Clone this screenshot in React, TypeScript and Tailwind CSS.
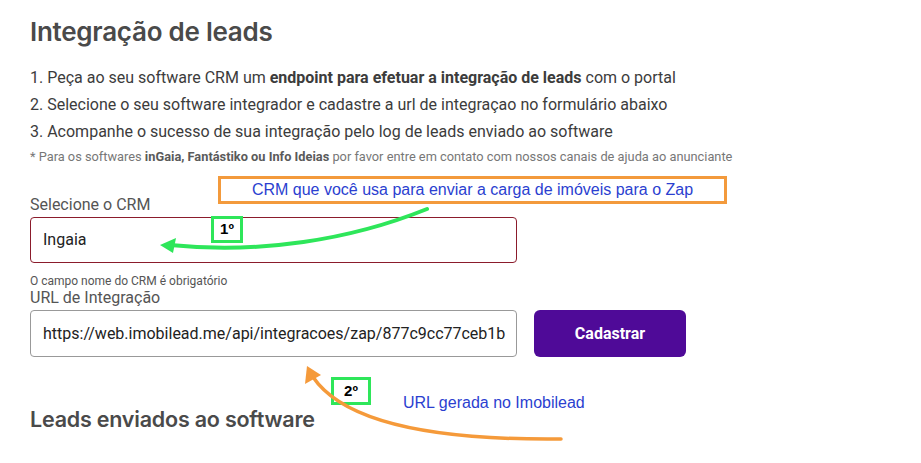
import React from 'react';

const roboto = "font-['Roboto','Liberation_Sans',sans-serif]";
const heading = "font-['Inter','Lato',sans-serif]";
const arial = "font-['Liberation_Sans','Arial',sans-serif]";

function Annotations() {
  return (
    <div className="pointer-events-none absolute inset-0">
      <div className={`absolute left-[218px] top-[176px] flex h-[28px] w-[509px] items-center justify-center border-[3px] border-[#f39a3c] bg-white text-[16px] text-[#2b3fd0] ${arial}`}>
        CRM que você usa para enviar a carga de imóveis para o Zap
      </div>
      <div className={`absolute left-[211px] top-[216px] flex h-[27px] w-[32px] items-center justify-center border-[3px] border-[#2ee65a] bg-white text-[15px] font-bold text-black ${arial}`}>
        1º
      </div>
      <div className={`absolute left-[331px] top-[377px] flex h-[28px] w-[40px] items-center justify-center border-[3px] border-[#2ee65a] bg-white text-[15px] font-bold text-black ${arial}`}>
        2º
      </div>
      <div className={`absolute left-[403px] top-[393px] text-[16px] leading-[20px] text-[#2b3fd0] ${arial}`}>
        URL gerada no Imobilead
      </div>
      <svg className="absolute inset-0" width="921" height="463" viewBox="0 0 921 463">
        <path d="M427 209 C 350 240, 260 254, 170 245" fill="none" stroke="#2ee65a" strokeWidth="4" strokeLinecap="round" />
        <polygon points="160,245 176,238 173,253" fill="#2ee65a" />
        <path d="M561 439 C 470 440, 350 432, 313 377" fill="none" stroke="#f59a3a" strokeWidth="3.5" strokeLinecap="round" />
        <polygon points="307,366 305,384 321,375" fill="#f59a3a" />
      </svg>
    </div>
  );
}

export default function App() {
  return (
    <div className="relative h-[463px] w-[921px] overflow-hidden bg-white">
      <div className="px-[30px] pt-[16px]">
        <h1 className={`text-[26px] leading-[32px] font-semibold tracking-[-0.01em] text-[#4a4a4a] ${heading}`}>
          Integração de leads
        </h1>

        <ol className={`mt-[16px] text-[16px] leading-[27px] text-[#3c3c3c] ${roboto}`}>
          <li>
            1. Peça ao seu software CRM um <b className="font-bold">endpoint para efetuar a integração de leads</b> com o portal
          </li>
          <li>2. Selecione o seu software integrador e cadastre a url de integraçao no formulário abaixo</li>
          <li>3. Acompanhe o sucesso de sua integração pelo log de leads enviado ao software</li>
        </ol>
        <p className={`mt-[3px] text-[12.8px] leading-[18px] text-[#777] ${roboto}`}>
          * Para os softwares <b className="font-bold text-[#5a5a5a]">inGaia, Fantástiko ou Info Ideias</b> por favor entre em contato com nossos canais de ajuda ao anunciante
        </p>

        <label className={`mt-[27px] block text-[16px] leading-[24px] text-[#555] ${roboto}`}>Selecione o CRM</label>
        <div className={`flex h-[46px] w-[487px] items-center rounded-[4px] border border-[#8b1c2c] px-[12px] text-[16px] text-[#222] ${roboto}`}>
          Ingaia
        </div>
        <p className={`mt-[9px] text-[12px] leading-[18px] text-[#555] ${roboto}`}>O campo nome do CRM é obrigatório</p>
        <label className={`block text-[16px] leading-[16px] text-[#555] ${roboto}`}>URL de Integração</label>

        <div className="mt-[4px] flex items-center gap-[17px]">
          <div className={`flex h-[47px] w-[487px] items-center overflow-hidden whitespace-nowrap rounded-[4px] border border-[#999] px-[12px] text-[16px] text-[#222] ${roboto}`}>
            https://web.imobilead.me/api/integracoes/zap/877c9cc77ceb1b
          </div>
          <button className={`h-[47px] w-[152px] rounded-[6px] bg-[#4f0a98] text-[16px] font-bold text-white ${roboto}`}>
            Cadastrar
          </button>
        </div>

        <h2 className={`mt-[48px] text-[21.5px] leading-[28px] font-semibold tracking-[-0.01em] text-[#4a4a4a] ${heading}`}>
          Leads enviados ao software
        </h2>
      </div>
      <Annotations />
    </div>
  );
}
